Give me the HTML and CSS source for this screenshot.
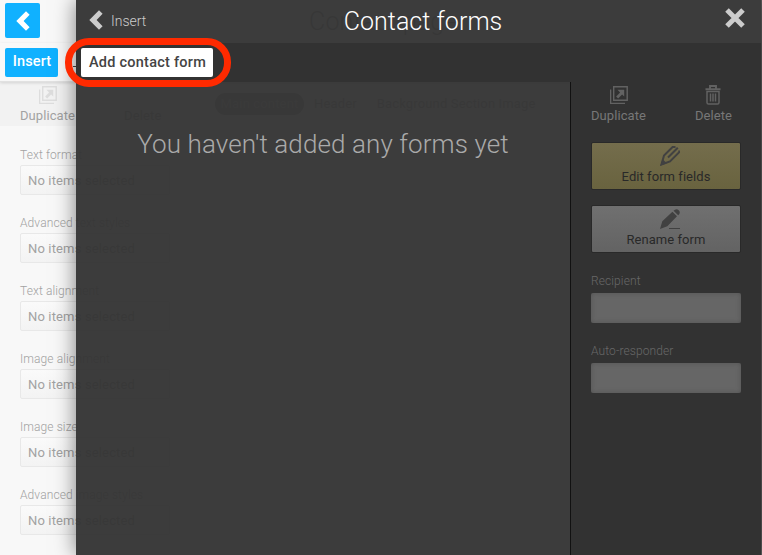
FILE: index.html
```html
<!DOCTYPE html>
<html lang="en">
<head>
<meta charset="utf-8">
<title>Contact forms</title>
<link rel="stylesheet" href="styles.css">
</head>
<body>
<svg class="defs" width="0" height="0">
  <symbol id="chevron" viewBox="0 0 14 20"><path d="M10 .2 13.600 3.800 7.600 10l6 6.200L10 19.800.3 10z" fill="currentColor"/></symbol>
  <symbol id="duplicate" viewBox="0 0 18 18"><path d="M.6 3.5v13.9H15M3.7.8h13.5v13.5H3.7z" fill="none" stroke="currentColor" stroke-width="1.4"/><path d="M7.5 3.8h6.7v6.700l-2.100-2.100-4 4-2-2 4-4z" fill="currentColor"/></symbol>
</svg>
<main class="page">
  <header class="page-top"><button class="back"><svg width="14" height="20"><use href="#chevron"/></svg></button><h2>Contact page</h2></header>
  <div class="page-tools"><button class="insert">Insert</button><i class="dash"></i><button class="publish">Publish Changes</button></div>
  <div class="page-tabs">
    <div class="action"><svg width="18" height="18"><use href="#duplicate"/></svg><span>Duplicate</span></div>
    <span class="gone">Delete</span>
    <nav><b>Main content</b><span>Header</span><span>Background Section Image</span></nav>
  </div>
  <div class="page-fields">
    <div class="pick"><label>Text format</label><div>No items selected</div></div>
    <div class="pick"><label>Advanced text styles</label><div>No items selected</div></div>
    <div class="pick"><label>Text alignment</label><div>No items selected</div></div>
    <div class="pick"><label>Image alignment</label><div>No items selected</div></div>
    <div class="pick"><label>Image size</label><div>No items selected</div></div>
    <div class="pick"><label>Advanced image styles</label><div>No items selected</div></div>
  </div>
</main>
<section class="panel">
  <header class="panel-top">
    <a class="panel-back"><svg width="14" height="20"><use href="#chevron"/></svg><span>Insert</span></a>
    <h1>Contact forms</h1>
    <svg class="close" width="20" height="20" viewBox="0 0 20 20"><path d="M2 2 18 18M18 2 2 18" stroke="currentColor" stroke-width="5"/></svg>
  </header>
  <div class="panel-tools"><button class="add">Add contact form</button></div>
  <div class="panel-body">
    <p class="empty">You haven't added any forms yet</p>
    <aside>
      <div class="actions">
        <div class="action"><svg width="18" height="18"><use href="#duplicate"/></svg><span>Duplicate</span></div>
        <div class="action"><svg width="16" height="20" viewBox="0 0 16 20"><path d="M.5 4.2h15M5 3.500V1h6v2.500" fill="none" stroke="currentColor" stroke-width="1.900"/><path d="M2 6.500v11q0 1.600 1.600 1.600h8.800q1.600 0 1.600-1.600v-11z M5.500 8.500v8M8 8.500v8M10.500 8.500v8" fill="none" stroke="currentColor" stroke-width="1.500"/></svg><span>Delete</span></div>
      </div>
      <button class="wide edit"><svg width="20" height="20" viewBox="0 0 20 20"><path d="M15.500 1H12.600L4 9.500 1.500 18.500l8.500-3L19.200 6.200V4.500M8 11.500 17.800 1.800" fill="none" stroke="currentColor" stroke-width="2"/><path d="M.2 19.800 2.500 13l4.300 4.200z" fill="currentColor"/></svg><span>Edit form fields</span></button>
      <button class="wide rename"><svg width="20" height="20" viewBox="0 0 20 20"><path d="M0 20 2.300 12.200 12.400 2.800l4.600 4.500L7.300 17.200zM13.500 1.800q2.800-3 5.200-.6t-.5 5z" fill="currentColor"/><path d="M9 19.500h11" stroke="currentColor"/></svg><span>Rename form</span></button>
      <div class="entry"><label>Recipient</label><input type="text" aria-label="Recipient"></div>
      <div class="entry"><label>Auto-responder</label><input type="text" aria-label="Auto-responder"></div>
    </aside>
  </div>
</section>
<div class="ring"></div>
</body>
</html>
```
FILE: styles.css
```css
* { box-sizing: border-box; }
body { margin: 0; width: 762px; height: 555px; overflow: hidden; position: relative; background: #f8f8f8; font: 13px/16px Roboto, sans-serif; letter-spacing: .15px; }
button { border: 0; padding: 0; font: inherit; letter-spacing: inherit; }
h1, h2, p { margin: 0; font-weight: 300; }
svg { display: block; }
.defs { position: absolute; }
.page { height: 555px; overflow: hidden; color: #a2a2a2; }
.page-top { height: 43px; display: flex; align-items: flex-start; padding: 3px 5px; }
.back { width: 35px; height: 35px; background: #10b1ff; color: #fff; border-radius: 2px; display: grid; place-items: center; }
.page-top h2 { margin: 4px 0 0 269px; font-size: 25px; line-height: 30px; color: #888; }
.page-tools { position: relative; height: 39px; padding: 5px; display: flex; border-bottom: 1px solid #e1e1e1; box-shadow: 0 1px 3px #0002; }
.insert { width: 53px; height: 29px; background: #10b1ff; color: #fff; border-radius: 2px; font-size: 14.5px; font-weight: 500; padding: 0 0 1px 1px; letter-spacing: .1px; }
.dash { width: 12px; height: 1px; margin: 18px 0 0 15px; background: #444; }
.publish { width: 130px; height: 29px; margin-left: 455px; background: #eee; color: #bbb; font-size: 15px; }
.page-tabs { height: 44px; background: #f2f2f2; display: flex; }
.page-tabs .action { margin-left: 20px; padding-top: 4px; width: 55px; letter-spacing: .1px; }
.action { display: flex; flex-direction: column; align-items: center; }
.page-tabs .action svg { color: #ddd; margin-bottom: 4px; }
.gone { margin: 26px 0 0 49px; width: 40px; }
.page-tabs nav { display: flex; gap: 10px; margin: 11px 0 0 51px; white-space: nowrap; line-height: 22px; }
.page-tabs b { width: 89px; height: 22px; text-align: center; border-radius: 11px; background: #999; color: #ccc; font-weight: 400; }
.page-tabs nav span { margin-right: 10px; }
.page-fields { padding: 21px 20px; }
.pick { height: 68px; width: 150px; }
label { display: block; font-weight: 300; font-size: 12px; line-height: 16px; height: 18px; letter-spacing: .1px; }
.pick div { height: 30px; padding-left: 7px; line-height: 29px; border: 1px solid #e8e8e8; border-radius: 2px; background: linear-gradient(#fafafa, #f3f3f3); letter-spacing: .15px; }
.panel { position: absolute; left: 76px; top: 0; width: 685px; height: 555px; background: rgba(51, 51, 51, .955); box-shadow: 0 0 20px rgba(0, 0, 0, .5), 1px 0 #606060; color: #ccc; }
.panel-top { height: 43px; display: grid; grid-template-columns: 120px 1fr 120px; align-items: start; }
.panel-back { display: flex; gap: 8px; padding: 10px 0 0 13px; font-weight: 300; line-height: 23px; font-size: 14px; letter-spacing: 0; }
h1 { text-align: center; color: #fff; font-size: 25px; line-height: 30px; padding: 7px 0 0 9px; letter-spacing: .05px; }
.close { justify-self: end; margin: 8px 16px 0 0; }
.panel-tools { height: 39px; padding: 5px; background: #323232; }
.add { display: block; width: 132px; height: 29px; border-radius: 2px; background: #fff; color: #444; font-size: 14.5px; font-weight: 500; padding: 0 0 0 1px; letter-spacing: .25px; }
.panel-body { height: 473px; display: grid; grid-template-columns: 1fr 191px; }
.empty { text-align: center; font-size: 26px; line-height: 30px; padding-top: 47px; color: #aaa; letter-spacing: .1px; }
aside { background: #323232; border-left: 1px solid #111; padding: 3px 20px; color: #777; }
.actions { display: flex; justify-content: space-between; height: 57px; padding-right: 9px; letter-spacing: .08px; }
.actions .action { height: 39px; justify-content: space-between; }
.actions .action svg { color: #626262; }
.actions .action:first-child svg { margin-top: 1px; }
.wide { display: flex; flex-direction: column; align-items: center; width: 150px; height: 48px; border: 1px solid #292929; border-radius: 2px; padding-top: 3px; color: #292929; margin-bottom: 15px; gap: 3px; letter-spacing: .05px; }
.wide svg { height: 20px; margin-left: 8px; color: #414141; flex: none; }
.edit { background: linear-gradient(#746d4c, #69633f); }
.rename { background: linear-gradient(#707070, #636363); }
.entry { height: 70px; padding-top: 5px; width: 150px; }
.entry label { height: 20px; color: #686868; }
.entry input { display: block; width: 150px; height: 30px; border: 0; border-radius: 2px; background: #666; box-shadow: inset 0 0 5px #4448; }
.ring { position: absolute; left: 65px; top: 38px; width: 166px; height: 49px; border: 7px solid #ff2a00; border-radius: 24px; }
```
